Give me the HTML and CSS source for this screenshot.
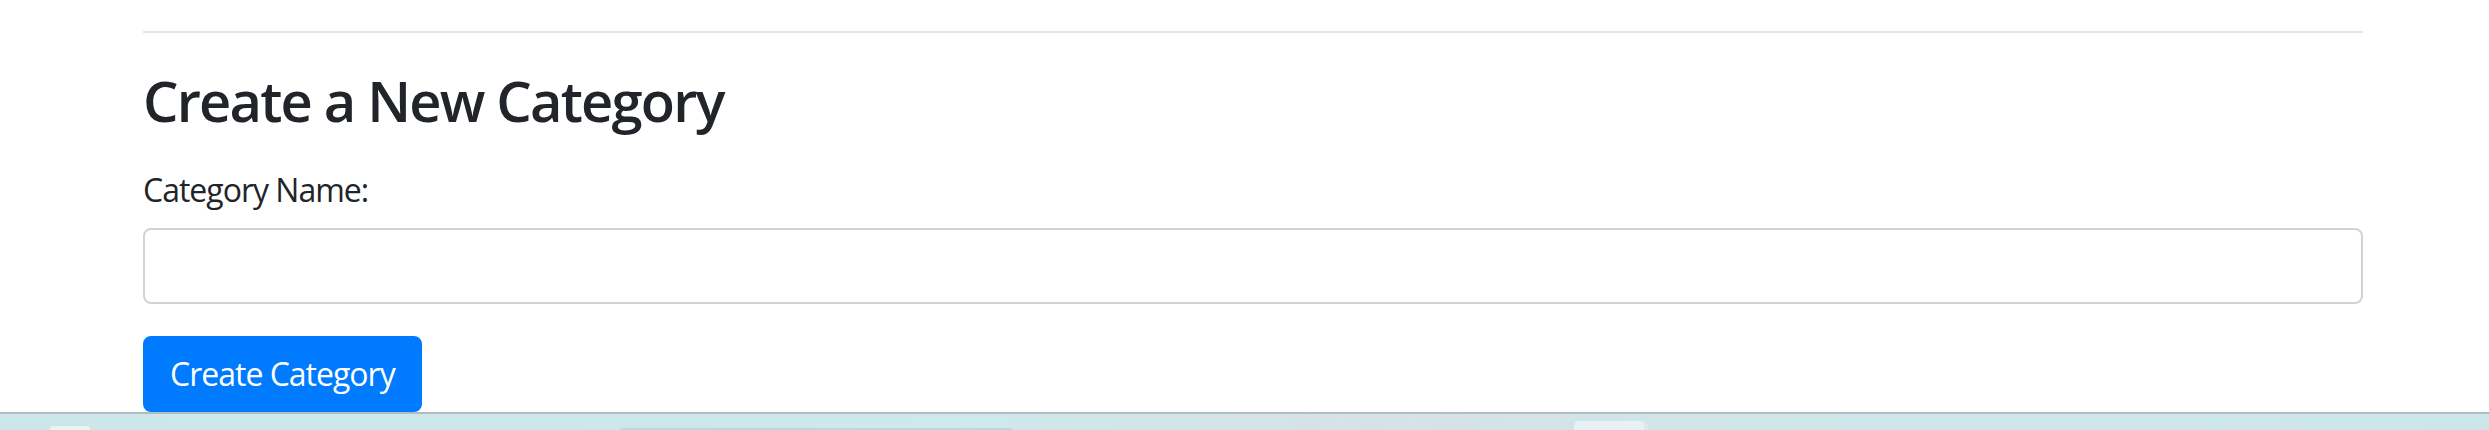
FILE: index.html
```html
<!DOCTYPE html>
<html lang="en">
<head>
<meta charset="utf-8">
<title>Create a New Category</title>
<link rel="stylesheet" href="styles.css">
</head>
<body>
<div class="page">
  <main class="container">
    <hr class="divider">
    <h3 class="title">Create a New Category</h3>
    <form class="form">
      <div class="form-group">
        <label class="label" for="name">Category Name:</label>
        <input class="input" type="text" id="name" name="name">
      </div>
      <button class="btn" type="button">Create Category</button>
    </form>
  </main>
</div>
<div class="taskbar">
  <span class="tb-item tb-a"></span>
  <span class="tb-item tb-b"></span>
  <span class="tb-item tb-c"></span>
</div>
</body>
</html>
```

FILE: styles.css
```css
html, body {
  margin: 0;
  padding: 0;
}
body {
  width: 2489px;
  height: 430px;
  overflow: hidden;
  display: flex;
  flex-direction: column;
  background: #ffffff;
  font-family: "Open Sans", "Noto Sans", sans-serif;
  color: #212529;
}
.page {
  height: 412px;
  flex: none;
  overflow: hidden;
}
.container {
  padding: 31px 126px 0 143px;
}
.divider {
  margin: 0 0 32px 0;
  border: 0;
  border-top: 2px solid #e5e5e5;
  height: 0;
}
.title {
  margin: 0 0 30px 0;
  padding-top: 2px;
  font-size: 56px;
  line-height: 67px;
  font-weight: 600;
  letter-spacing: -1.8px;
  color: #212529;
}
.form-group {
  margin-bottom: 32px;
}
.label {
  display: inline-block;
  margin-bottom: 14px;
  padding-top: 2px;
  font-size: 32px;
  line-height: 48px;
  letter-spacing: -1px;
}
.input {
  display: block;
  box-sizing: border-box;
  width: 100%;
  height: 76px;
  margin: 0;
  padding: 12px 24px;
  border: 2px solid #ced4da;
  border-radius: 8px;
  font-size: 32px;
  font-family: inherit;
  background: #fff;
}
.btn {
  box-sizing: border-box;
  height: 76px;
  padding: 0 25px;
  border: 2px solid #007bff;
  border-radius: 8px;
  background: #007bff;
  color: #ffffff;
  font-family: inherit;
  font-size: 32px;
  line-height: 48px;
  letter-spacing: -1px;
}
.taskbar {
  flex: 1;
  display: flex;
  align-items: flex-end;
  border-top: 2px solid #b1bdbe;
  background: linear-gradient(90deg, #cce6e9 0%, #cfe8eb 40%, #d6e2e6 55%, #cfe7ea 75%, #cde6e9 100%);
}
.tb-item {
  display: block;
}
.tb-a {
  margin-left: 50px;
  width: 40px;
  height: 4px;
  border-radius: 14px 14px 0 0;
  background: #e9f4f5;
}
.tb-b {
  margin-left: 530px;
  width: 392px;
  height: 2px;
  border-radius: 3px 3px 0 0;
  background: #bcd8dc;
}
.tb-c {
  margin-left: 562px;
  width: 70px;
  height: 9px;
  border-radius: 5px 5px 0 0;
  background: #e6f2f4;
  box-shadow: 4px 0 0 #d9e9ec;
}
```
